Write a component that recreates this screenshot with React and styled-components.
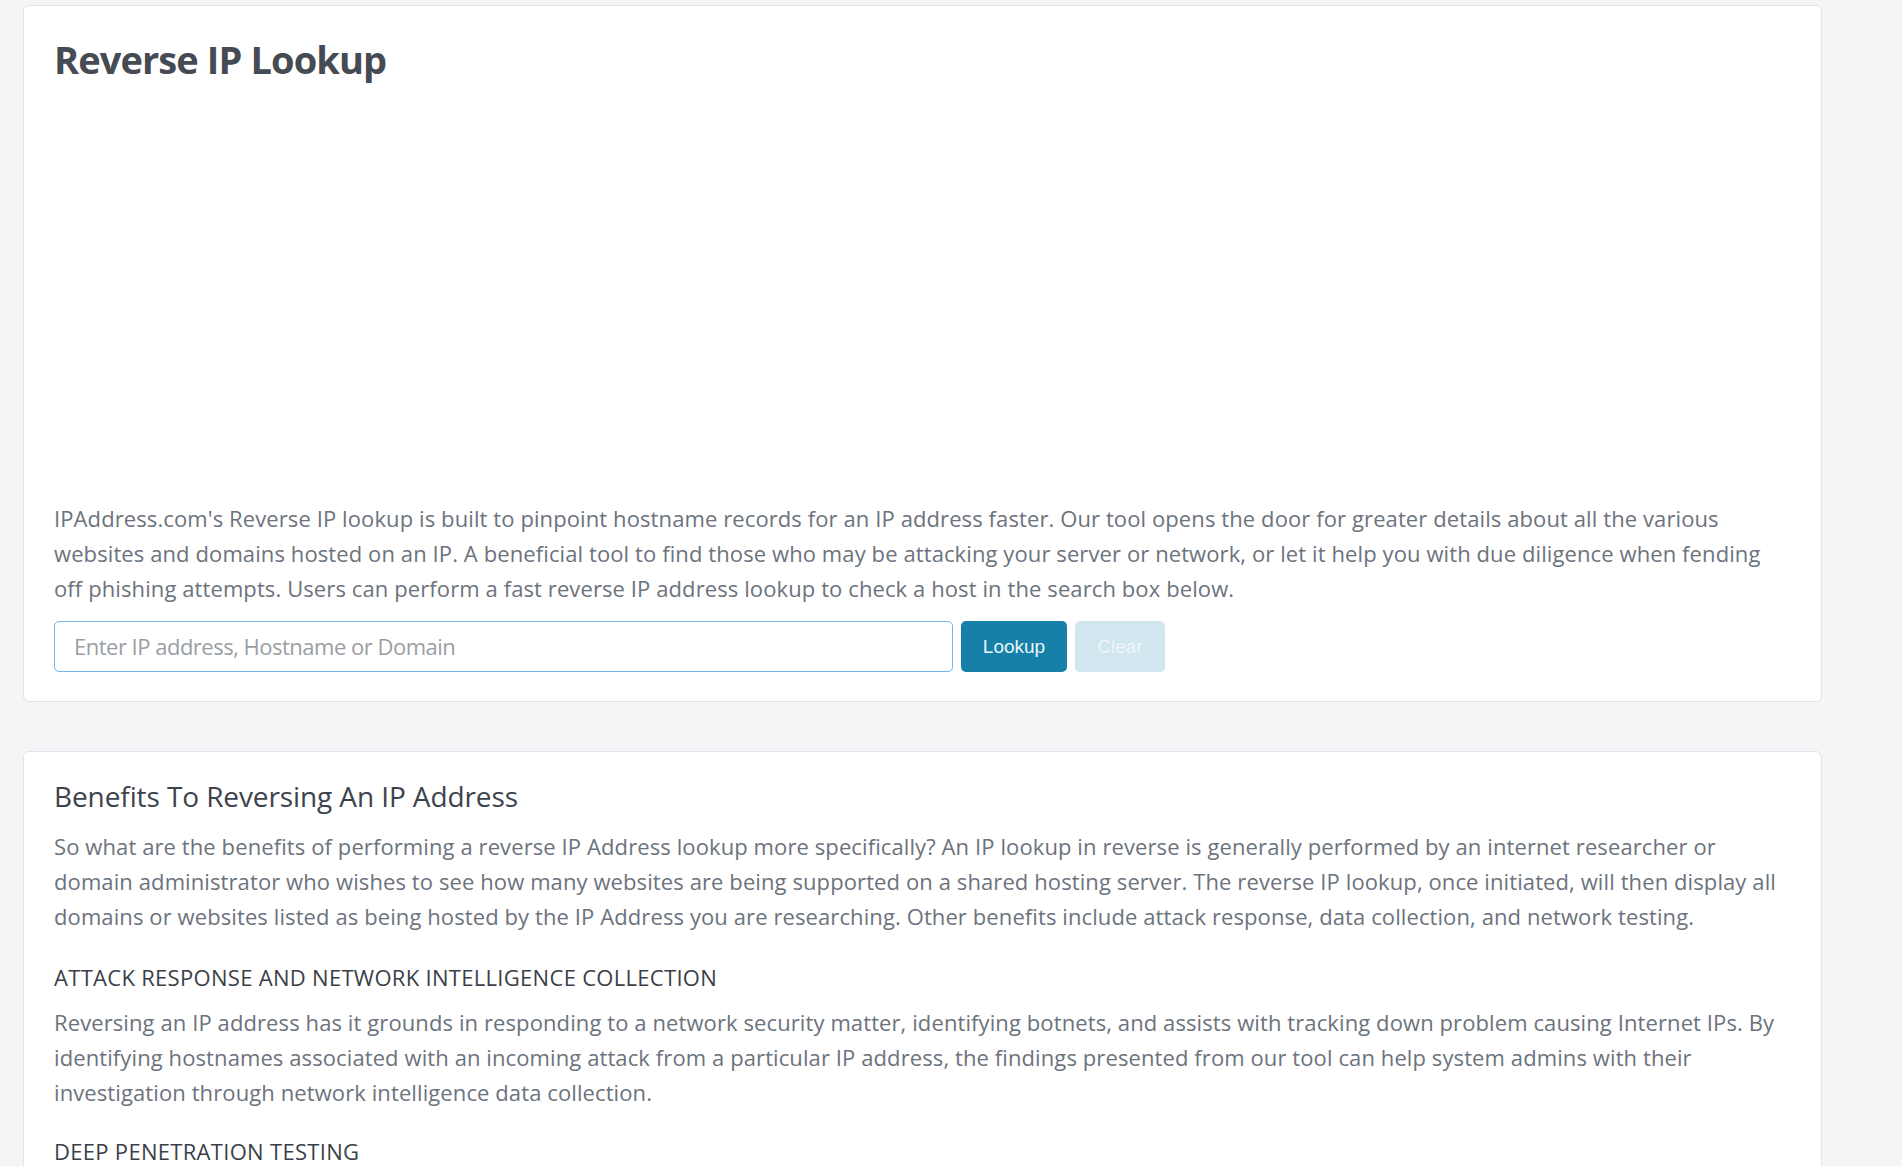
import styled, { createGlobalStyle } from "styled-components";

const GlobalStyle = createGlobalStyle`
  html, body {
    margin: 0;
    padding: 0;
    background: #f4f5f7;
    font-family: "Open Sans", "Noto Sans", sans-serif;
  }
  * { box-sizing: border-box; }
`;

const Page = styled.div`
  padding: 5px 80px 40px 23px;
  display: flex;
  flex-direction: column;
  gap: 49px;
`;

const Card = styled.section`
  background: #fff;
  border: 1px solid #e2e4e8;
  border-radius: 6px;
  padding: ${(p) => p.$pad || "30px"};
`;

const Title = styled.h1`
  margin: 0;
  font-size: 38px;
  line-height: 48px;
  font-weight: 700;
  color: #454a53;
  letter-spacing: -0.9px;
`;

const AdSlot = styled.div`
  height: 418px;
`;

const Text = styled.p`
  margin: 0 0 ${(p) => p.$mb || "15px"};
  font-size: 22px;
  line-height: 35px;
  color: #6c737d;
  letter-spacing: 0.1px;
`;

const SearchRow = styled.form`
  display: flex;
  gap: 8px;
  align-items: stretch;
`;

const Input = styled.input`
  width: 899px;
  height: 51px;
  border: 1px solid #75b4e6;
  border-radius: 5px;
  padding: 0 19px 2px;
  font-family: "Open Sans", sans-serif;
  font-size: 22px;
  letter-spacing: -0.5px;
  color: #495057;
  outline: none;
  &::placeholder { color: #9a9ea4; }
`;

const Button = styled.button`
  width: ${(p) => p.$w};
  height: 51px;
  border: none;
  border-radius: 5px;
  font-family: "Liberation Sans", Arial, sans-serif;
  font-size: 19px;
  color: ${(p) => (p.$muted ? "#eef6f9" : "#e9f4f8")};
  background: ${(p) => (p.$muted ? "#d1e6ee" : "#1780a8")};
  cursor: ${(p) => (p.$muted ? "default" : "pointer")};
`;

const Heading = styled.h2`
  margin: 0 0 15px;
  font-size: 28px;
  line-height: 36px;
  font-weight: 400;
  color: #3d434c;
  letter-spacing: -0.1px;
`;

const SubHeading = styled.h3`
  margin: 0 0 13px;
  font-size: 22px;
  line-height: 30px;
  font-weight: 400;
  color: #3a3f47;
  text-transform: uppercase;
  letter-spacing: 0.3px;
`;

export default function App() {
  return (
    <>
      <GlobalStyle />
      <Page>
        <Card $pad="29px 30px 29px">
          <Title>Reverse IP Lookup</Title>
          <AdSlot />
          <Text>
            IPAddress.com's Reverse IP lookup is built to pinpoint hostname records for an IP
            address faster. Our tool opens the door for greater details about all the various
            websites and domains hosted on an IP. A beneficial tool to find those who may be
            attacking your server or network, or let it help you with due diligence when fending
            off phishing attempts. Users can perform a fast reverse IP address lookup to check a
            host in the search box below.
          </Text>
          <SearchRow onSubmit={(e) => e.preventDefault()}>
            <Input type="text" placeholder="Enter IP address, Hostname or Domain" />
            <Button type="submit" $w="106px">Lookup</Button>
            <Button type="button" $w="90px" $muted disabled>Clear</Button>
          </SearchRow>
        </Card>
        <Card $pad="26px 30px 30px">
          <Heading>Benefits To Reversing An IP Address</Heading>
          <Text $mb="28px">
            So what are the benefits of performing a reverse IP Address lookup more specifically?
            An IP lookup in reverse is generally performed by an internet researcher or domain
            administrator who wishes to see how many websites are being supported on a shared
            hosting server. The reverse IP lookup, once initiated, will then display all domains
            or websites listed as being hosted by the IP Address you are researching. Other
            benefits include attack response, data collection, and network testing.
          </Text>
          <SubHeading>Attack Response and Network Intelligence Collection</SubHeading>
          <Text $mb="26px">
            Reversing an IP address has it grounds in responding to a network security matter,
            identifying botnets, and assists with tracking down problem causing Internet IPs. By
            identifying hostnames associated with an incoming attack from a particular IP address,
            the findings presented from our tool can help system admins with their investigation
            through network intelligence data collection.
          </Text>
          <SubHeading>Deep Penetration Testing</SubHeading>
        </Card>
      </Page>
    </>
  );
}
